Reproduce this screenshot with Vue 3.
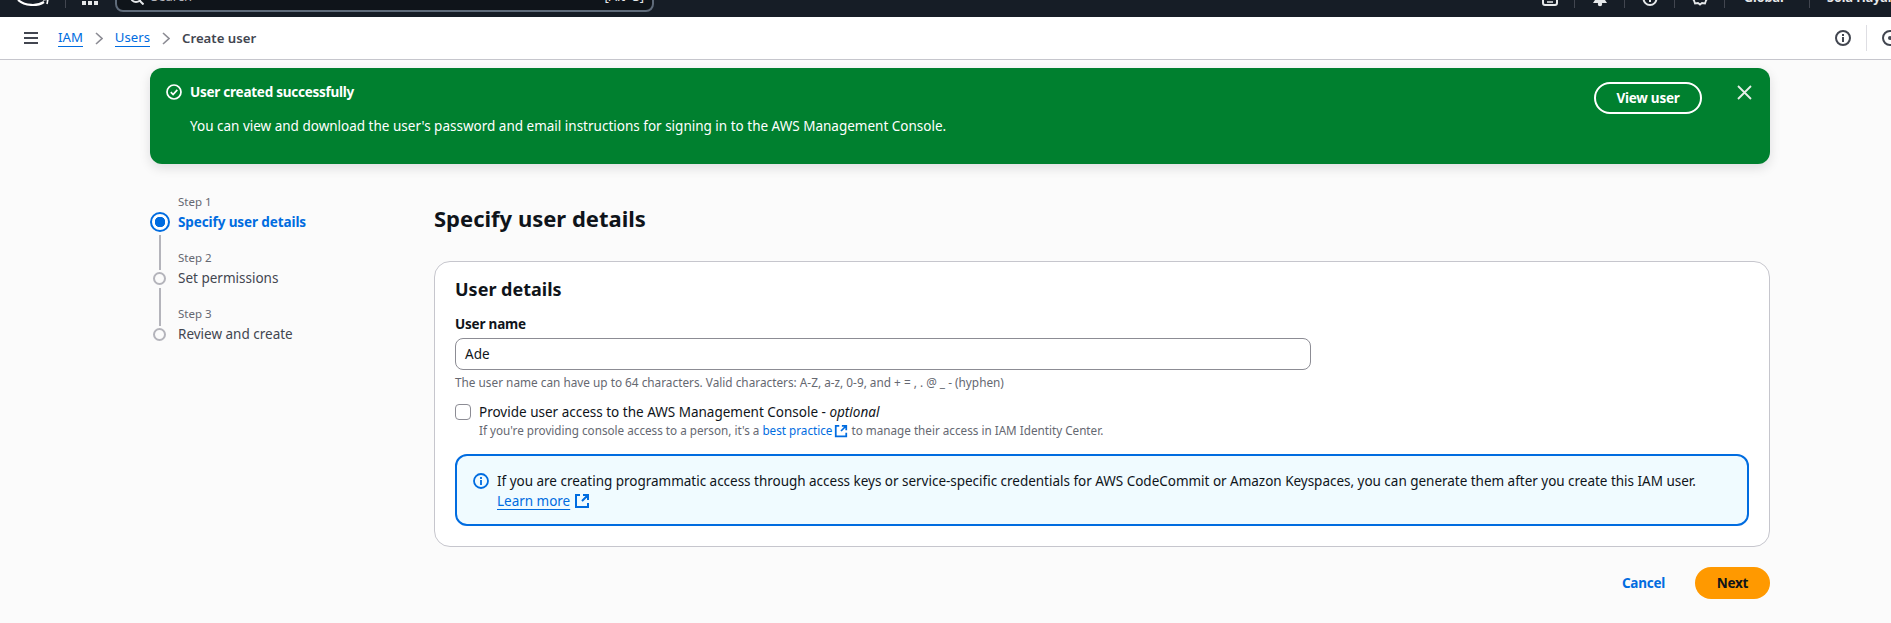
<template>
  <div class="page">
    <header class="topbar">
      <div class="top-left">
        <svg class="aws-smile" width="34" height="8" viewBox="0 0 34 8">
          <path d="M1 0 C 8 6, 20 6.5, 27 2" fill="none" stroke="#fff" stroke-width="2.2" />
          <path d="M26 0 L31 -1 L30 4" fill="none" stroke="#fff" stroke-width="1.6" />
        </svg>
        <span class="top-sep"></span>
        <svg class="grid-icon" width="16" height="5" viewBox="0 0 16 5">
          <rect x="0" y="0" width="4" height="4" fill="#e6e8ea" />
          <rect x="6" y="0" width="4" height="4" fill="#e6e8ea" />
          <rect x="12" y="0" width="4" height="4" fill="#e6e8ea" />
        </svg>
        <div class="search">
          <svg class="search-icon" width="14" height="14" viewBox="0 0 14 14">
            <circle cx="6" cy="6" r="5" stroke="#e6e8ea" stroke-width="2" fill="none" />
            <path d="M9.5 9.5L13.5 13.5" stroke="#e6e8ea" stroke-width="2" fill="none" />
          </svg>
          <span class="search-text">Search</span>
          <span class="search-key">[Alt+S]</span>
        </div>
      </div>
      <div class="top-right">
        <span class="top-cell">
          <svg class="top-icon" width="16" height="16" viewBox="0 0 16 16">
            <rect x="1" y="1" width="14" height="13" rx="2" stroke="#e6e8ea" stroke-width="2" fill="none" />
            <path d="M5 11h6" stroke="#e6e8ea" stroke-width="1.5" />
          </svg>
        </span>
        <span class="top-cell">
          <svg class="top-icon" width="16" height="16" viewBox="0 0 16 16">
            <path d="M3 3h10v6l2 3H1l2-3z" fill="#e6e8ea" />
            <circle cx="8" cy="13" r="2.2" fill="#e6e8ea" />
          </svg>
        </span>
        <span class="top-cell">
          <svg class="top-icon" width="16" height="16" viewBox="0 0 16 16">
            <circle cx="8" cy="7.5" r="6.5" stroke="#e6e8ea" stroke-width="2" fill="none" />
            <path d="M8 8v3" stroke="#e6e8ea" stroke-width="2" />
          </svg>
        </span>
        <span class="top-cell">
          <svg class="top-icon" width="16" height="16" viewBox="0 0 16 16">
            <path d="M8 1l2 2 3-.5 1 3 1.5 2-1.500 2-1 3-3-.5-2 1.500-2-1.500-3 .5-1-3L.5 7.500 2 5.500l1-3 3 .5z" stroke="#e6e8ea" stroke-width="1.8" fill="none" />
          </svg>
        </span>
        <span class="top-cell wide"><span class="top-text">Global</span></span>
        <span class="top-cell account"><span class="top-text">Sola Hayar</span></span>
      </div>
    </header>

    <nav class="crumbbar">
      <svg class="menu-icon" width="14" height="12" viewBox="0 0 14 12">
        <path d="M0 1h14M0 6h14M0 11h14" stroke="#424650" stroke-width="2" fill="none" />
      </svg>
      <a class="crumb">IAM</a>
      <svg class="chev" width="8" height="13" viewBox="0 0 8 13">
        <path d="M1 1l6 5.500-6 5.500" stroke="#8c8c94" stroke-width="1.6" fill="none" />
      </svg>
      <a class="crumb">Users</a>
      <svg class="chev" width="8" height="13" viewBox="0 0 8 13">
        <path d="M1 1l6 5.500-6 5.500" stroke="#8c8c94" stroke-width="1.6" fill="none" />
      </svg>
      <span class="crumb-current">Create user</span>
      <div class="crumb-tools">
        <svg width="16" height="16" viewBox="0 0 16 16">
          <circle cx="8" cy="8" r="7" stroke="#424650" stroke-width="2" fill="none" />
          <path d="M8 7v5M8 4v2" stroke="#424650" stroke-width="2" fill="none" />
        </svg>
        <span class="tool-sep"></span>
        <svg width="16" height="16" viewBox="0 0 16 16">
          <circle cx="8" cy="8" r="7" stroke="#424650" stroke-width="2" fill="none" />
          <circle cx="8" cy="8" r="2" fill="#424650" />
        </svg>
      </div>
    </nav>

    <main class="content">
      <section class="flash">
        <div class="flash-body">
          <div class="flash-title">
            <svg width="16" height="16" viewBox="0 0 16 16">
              <circle cx="8" cy="8" r="7" stroke="#fff" stroke-width="1.7" fill="none" />
              <path d="M4.800 8.200l2.300 2.300 4.200-4.600" stroke="#fff" stroke-width="1.7" fill="none" />
            </svg>
            <strong>User created successfully</strong>
          </div>
          <p class="flash-text">You can view and download the user's password and email instructions for signing in to the AWS Management Console.</p>
        </div>
        <button class="view-btn">View user</button>
        <svg class="flash-close" width="15" height="15" viewBox="0 0 15 15">
          <path d="M1 1l13 13M14 1L1 14" stroke="#e6efe9" stroke-width="1.8" fill="none" />
        </svg>
      </section>

      <div class="wizard">
        <ol class="steps">
          <li v-for="(step, i) in steps" :key="step.name" class="step" :class="{ active: i === 0 }">
            <span class="step-no">Step {{ i + 1 }}</span>
            <span class="step-name">{{ step.name }}</span>
          </li>
        </ol>

        <div class="form">
          <h1 class="form-title">Specify user details</h1>
          <section class="panel">
            <h2 class="panel-title">User details</h2>
            <label class="field-label">User name</label>
            <div class="input">Ade</div>
            <p class="hint">The user name can have up to 64 characters. Valid characters: A-Z, a-z, 0-9, and + = , . @ _ - (hyphen)</p>

            <div class="check-row">
              <span class="checkbox"></span>
              <div>
                <div class="check-label">Provide user access to the AWS Management Console - <em>optional</em></div>
                <div class="check-hint">
                  If you're providing console access to a person, it's a
                  <a class="inline-link">best practice</a>
                  <svg class="ext small" width="14" height="14" viewBox="0 0 16 16">
                    <path d="M6 2H2v12h12v-4M9 2h5v5M14 2L8 8" stroke="#006ce0" stroke-width="2" fill="none" />
                  </svg>
                  to manage their access in IAM Identity Center.
                </div>
              </div>
            </div>

            <div class="info">
              <svg class="info-icon" width="16" height="16" viewBox="0 0 16 16">
                <circle cx="8" cy="8" r="7" stroke="#006ce0" stroke-width="1.8" fill="none" />
                <path d="M8 7v5M8 4v2" stroke="#006ce0" stroke-width="1.8" fill="none" />
              </svg>
              <div class="info-text">
                <div>If you are creating programmatic access through access keys or service-specific credentials for AWS CodeCommit or Amazon Keyspaces, you can generate them after you create this IAM user.</div>
                <div class="learn">
                  <a class="learn-link">Learn more</a>
                  <svg class="ext" width="16" height="16" viewBox="0 0 16 16">
                    <path d="M6 2H2v12h12v-4M9 2h5v5M14 2L8 8" stroke="#006ce0" stroke-width="2" fill="none" />
                  </svg>
                </div>
              </div>
            </div>
          </section>

          <div class="actions">
            <a class="cancel">Cancel</a>
            <button class="next">Next</button>
          </div>
        </div>
      </div>
    </main>
  </div>
</template>

<script setup>
const steps = [
  { name: 'Specify user details' },
  { name: 'Set permissions' },
  { name: 'Review and create' }
]
</script>

<style>
html, body {
  margin: 0;
  background: #fbfbfb;
}
</style>

<style scoped>
.page {
  width: 1891px;
  height: 623px;
  overflow: hidden;
  font-family: "Noto Sans", "Open Sans", sans-serif;
  font-size: 13.5px;
  color: #0f141a;
  background: #fbfbfb;
}

/* Top bar, cut off by the screenshot */
.topbar {
  height: 17px;
  background: #161d26;
  display: flex;
  justify-content: space-between;
  overflow: hidden;
}
.top-left {
  display: flex;
  align-items: flex-start;
}
.aws-smile {
  margin-left: 17px;
}
.top-sep {
  width: 1px;
  height: 8px;
  margin-left: 14px;
  background: #424650;
}
.grid-icon {
  margin: 1px 0 0 16px;
}
.search {
  width: 539px;
  height: 32px;
  box-sizing: border-box;
  margin: -20px 0 0 17px;
  padding: 0 8px 0 13px;
  border: 2px solid #5f6b7a;
  border-radius: 8px;
  background: #0f141a;
  display: flex;
  align-items: center;
  gap: 7px;
  font-size: 13px;
  color: #b4b4bb;
}
.search-icon {
  margin-top: 4px;
}
.search-key {
  margin-left: auto;
  color: #e6e8ea;
}
.top-right {
  display: flex;
  color: #e6e8ea;
  font-size: 12.5px;
  font-weight: 700;
}
.top-cell {
  width: 49px;
  height: 8px;
  border-right: 1px solid #424650;
  display: flex;
  justify-content: center;
}
.top-cell.wide {
  width: 85px;
  justify-content: flex-start;
  padding-left: 19px;
  box-sizing: border-box;
}
.top-cell.account {
  width: 81px;
  border-right: 0;
  justify-content: flex-start;
  padding-left: 17px;
  box-sizing: border-box;
}
.top-icon {
  margin-top: -9px;
}
.top-text {
  margin-top: -10px;
  line-height: 16px;
  white-space: nowrap;
}

/* Breadcrumbs */
.crumbbar {
  height: 43px;
  box-sizing: border-box;
  background: #fff;
  border-bottom: 1px solid #c6c6cd;
  display: flex;
  align-items: center;
  padding-left: 24px;
  font-size: 13.2px;
}
.menu-icon {
  margin-right: 20px;
}
.crumb {
  color: #006ce0;
  border-bottom: 1px solid #006ce0;
  line-height: 17px;
}
.chev {
  margin: 0 12px;
}
.crumb-current {
  color: #424650;
  font-weight: 600;
}
.crumb-tools {
  margin-left: auto;
  display: flex;
  align-items: center;
  gap: 15px;
  margin-right: -7px;
}
.tool-sep {
  width: 1px;
  height: 26px;
  background: #dedee3;
}

/* Green flash */
.content {
  padding: 8px 121px 0 150px;
}
.flash {
  height: 96px;
  box-sizing: border-box;
  background: #00802f;
  border-radius: 12px;
  box-shadow: 0 4px 12px rgba(0, 7, 22, 0.12);
  color: #fff;
  display: flex;
  align-items: flex-start;
  padding: 14px 18px 0 16px;
}
.flash-body {
  flex: 1;
}
.flash-title {
  display: flex;
  align-items: center;
  gap: 8px;
  height: 20px;
  letter-spacing: -0.25px;
}
.flash-text {
  margin: 14px 0 0 24px;
  line-height: 20px;
}
.view-btn {
  width: 108px;
  height: 32px;
  margin-right: 35px;
  box-sizing: border-box;
  border: 2px solid #fff;
  border-radius: 20px;
  background: transparent;
  color: #fff;
  font: 700 13.5px "Noto Sans", sans-serif;
  letter-spacing: -0.25px;
}
.flash-close {
  margin-top: 3px;
}

/* Wizard */
.wizard {
  display: flex;
  margin-top: 30px;
}
.steps {
  width: 284px;
  flex-shrink: 0;
  list-style: none;
  margin: 0;
  padding: 0 0 0 28px;
  box-sizing: border-box;
}
.step {
  position: relative;
  height: 56px;
  display: flex;
  flex-direction: column;
  color: #424650;
}
.step::before {
  content: "";
  position: absolute;
  left: -25px;
  top: 22px;
  width: 13px;
  height: 13px;
  border: 2px solid #b4b4bb;
  border-radius: 50%;
  box-sizing: border-box;
}
.step:not(:last-child)::after {
  content: "";
  position: absolute;
  left: -19px;
  top: 38px;
  width: 2px;
  height: 38px;
  background: #b4b4bb;
}
.step.active::before {
  left: -28px;
  top: 18px;
  width: 20px;
  height: 20px;
  border-color: #006ce0;
  background: radial-gradient(circle, #006ce0 0 5px, #fff 5.5px);
}
.step.active::after {
  top: 41px;
  height: 35px;
}
.step-no {
  font-size: 11.5px;
  line-height: 16px;
  color: #656871;
}
.step-name {
  line-height: 24px;
}
.step.active .step-name {
  color: #006ce0;
  font-weight: 700;
  letter-spacing: -0.1px;
}

.form {
  flex: 1;
  padding-top: 8px;
}
.form-title {
  margin: 0;
  font-size: 22px;
  line-height: 32px;
  font-weight: 700;
}
.panel {
  margin-top: 27px;
  padding: 14px 20px 20px 20px;
  border: 1px solid #c6c6cd;
  border-radius: 16px;
  background: #fff;
}
.panel-title {
  margin: 0;
  font-size: 18px;
  line-height: 26px;
  font-weight: 700;
}
.field-label {
  display: block;
  margin-top: 13px;
  font-weight: 700;
  line-height: 18px;
  letter-spacing: -0.2px;
}
.input {
  width: 856px;
  height: 32px;
  box-sizing: border-box;
  margin-top: 5px;
  padding: 0 9px;
  border: 1px solid #8c8c94;
  border-radius: 8px;
  line-height: 30px;
}
.hint {
  margin: 4px 0 0;
  font-size: 11.8px;
  line-height: 16px;
  color: #656871;
}
.check-row {
  display: flex;
  gap: 8px;
  margin-top: 12px;
}
.checkbox {
  width: 16px;
  height: 16px;
  box-sizing: border-box;
  margin-top: 2px;
  border: 1px solid #8c8c94;
  border-radius: 4px;
}
.check-label {
  line-height: 20px;
}
.check-hint {
  font-size: 11.7px;
  line-height: 16px;
  color: #656871;
}
.inline-link {
  color: #006ce0;
}
.ext {
  vertical-align: -3px;
}
.ext.small {
  margin-left: 2px;
}
.info {
  display: flex;
  gap: 8px;
  height: 72px;
  box-sizing: border-box;
  margin-top: 16px;
  padding: 15px 16px 0;
  border: 2px solid #006ce0;
  border-radius: 12px;
  background: #f0fbff;
}
.info-icon {
  flex-shrink: 0;
  margin-top: 2px;
}
.info-text {
  line-height: 20px;
  letter-spacing: -0.02px;
}
.learn-link {
  color: #006ce0;
  text-decoration: underline;
  text-underline-offset: 3px;
  margin-right: 4px;
}
.actions {
  display: flex;
  justify-content: flex-end;
  align-items: center;
  gap: 30px;
  margin-top: 20px;
}
.cancel {
  color: #006ce0;
  font-weight: 700;
  letter-spacing: -0.25px;
}
.next {
  width: 75px;
  height: 32px;
  border: 0;
  border-radius: 20px;
  background: #ff9900;
  color: #0f141a;
  font: 700 13.5px "Noto Sans", sans-serif;
  letter-spacing: -0.25px;
}
</style>
